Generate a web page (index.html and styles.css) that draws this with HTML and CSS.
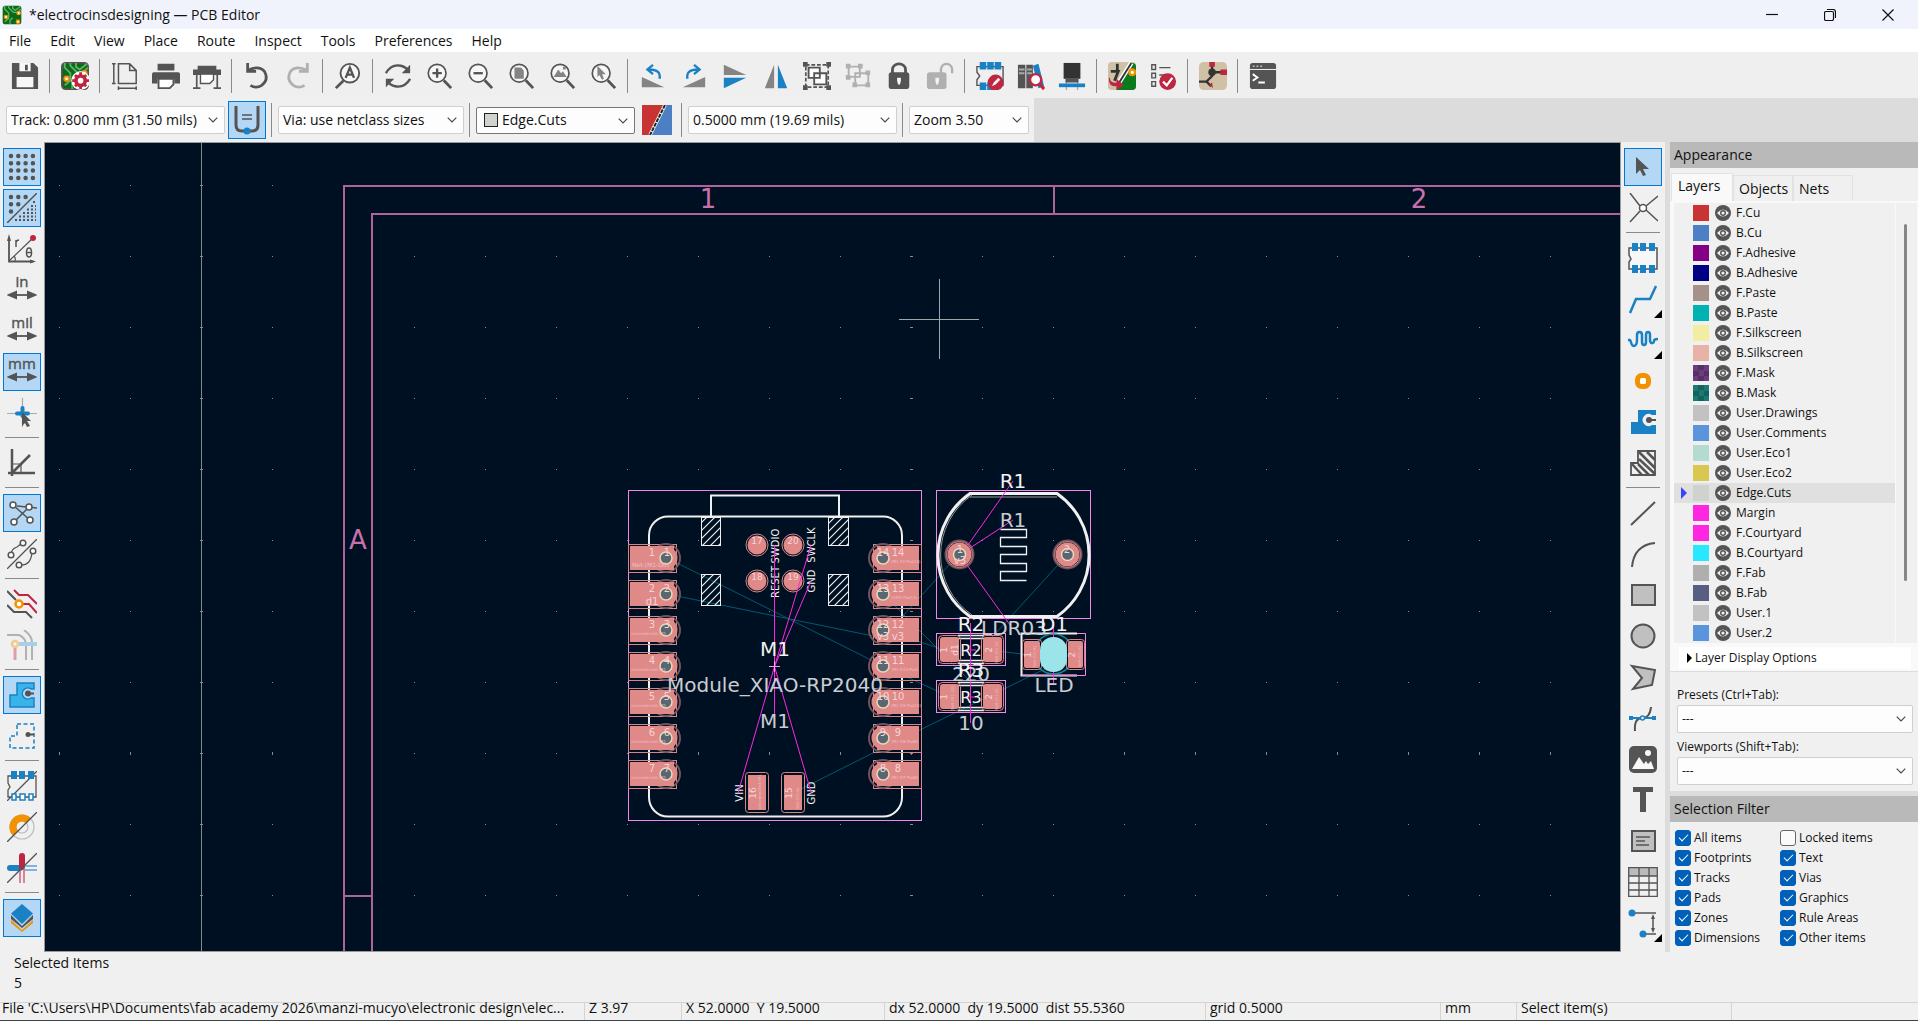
FILE: index.html
```html
<!DOCTYPE html>
<html lang="en">
<head>
<meta charset="utf-8">
<title>*electrocinsdesigning — PCB Editor</title>
<link rel="stylesheet" href="styles.css">
</head>
<body>
<svg class="defs" aria-hidden="true">
  <symbol id="eye" viewBox="0 0 16 16"><circle cx="8" cy="8" r="8" fill="#545454"/><path d="M2 8Q8 1 14 8Q8 15 2 8Z" fill="#f0f0f0"/><circle cx="8" cy="8" r="3" fill="#545454"/><circle cx="8" cy="8" r="1.6" fill="#f0f0f0"/></symbol>
  <symbol id="chev" viewBox="0 0 10 6"><path d="M.7.7 5 5 9.300.7" fill="none" stroke="#444" stroke-width="1.1"/></symbol>
  <symbol id="lens" viewBox="0 0 30 30"><circle cx="13" cy="12" r="9.500" fill="#f7f7f7" stroke="#545454" stroke-width="1.800"/><path d="M20 19.500 28 28" stroke="#545454" stroke-width="3"/></symbol>
  <symbol id="board" viewBox="0 0 30 30"><rect x="1" y="1" width="28" height="28" rx="4" fill="#0b6a16"/><path d="M4 1v5l6 6v8l-6 5M10 1v3l7 7h6l6-5M16 1v4l4 3 8-6M12 29v-6l4-4" fill="none" stroke="#5db068" stroke-width="2"/><circle cx="6" cy="18" r="2.500" fill="#fff" stroke="#f39200" stroke-width="2"/><circle cx="25" cy="12" r="2.500" fill="#fff" stroke="#f39200" stroke-width="2"/><circle cx="24" cy="25" r="2.500" fill="#fff" stroke="#f39200" stroke-width="2"/></symbol>
  <symbol id="arrows" viewBox="0 0 30 30"><path d="M4 20H26" stroke="#545454" stroke-width="1.800"/><path d="M2 20l7-3v6zM28 20l-7-3v6z" fill="#545454"/></symbol>
</svg>

<header class="titlebar">
  <svg class="appicon" viewBox="0 0 30 30"><use href="#board"/></svg>
  <h1>*electrocinsdesigning — PCB Editor</h1>
  <button aria-label="Minimize"><svg viewBox="0 0 12 12"><path d="M0 5.500H12"/></svg></button>
  <button aria-label="Restore"><svg viewBox="0 0 12 12"><rect x=".5" y="2.500" width="9" height="9" rx="1.500"/><path d="M3 .5H9Q11.500.5 11.500 3V9"/></svg></button>
  <button aria-label="Close"><svg viewBox="0 0 12 12"><path d="M.5.5l11 11M11.500.5l-11 11"/></svg></button>
</header>

<nav class="menubar">
  <button>File</button><button>Edit</button><button>View</button><button>Place</button><button>Route</button><button>Inspect</button><button>Tools</button><button>Preferences</button><button>Help</button>
</nav>

<div class="toolbar" role="toolbar">
  <button aria-label="Save"><svg viewBox="0 0 30 30"><path class="d" d="M1 1h23l5 5v23H1z"/><path class="w" d="M9 1h12v9H9zM6 16h18v11H6z"/><path class="d" d="M15 3h3v6h-3z"/></svg></button>
  <hr>
  <button aria-label="Board setup"><svg viewBox="0 0 30 30"><use href="#board"/><circle cx="21" cy="20" r="10" fill="#fff" stroke="none"/><circle cx="21" cy="20" r="5" stroke="#bf2641" stroke-width="4"/><path stroke="#bf2641" stroke-width="3" d="M21 11v4M21 25v4M12 20h4M26 20h4M15 14l3 3M24 23l3 3M27 14l-3 3M15 26l3-3"/></svg></button>
  <hr>
  <button aria-label="Page settings"><svg viewBox="0 0 30 30"><path stroke-width="1.600" d="M8 2h12l7 7v14H8zM20 2v7h7M3 2v21M1 2h4M1 23h4M8 28h19M8 26v4M27 26v4"/></svg></button>
  <button aria-label="Print"><svg viewBox="0 0 30 30"><path class="d" d="M6 2h18v7H6zM2 11h26q2 0 2 2v10h-6v-5H6v5H0V13q0-2 2-2z"/><path fill="#fff" stroke-width="2" d="M7 18h16v6l-4 4H7z"/></svg></button>
  <button aria-label="Plot"><svg viewBox="0 0 30 30"><path class="d" d="M5 4h20v4H5zM0 8h30v6H0z"/><path fill="#fff" stroke-width="1.500" d="M8 13h14v6l-4 4H8z"/><path stroke-width="1.800" d="M4 14v14M26 14v14M0 28h8M22 28h8"/></svg></button>
  <hr>
  <button aria-label="Undo"><svg viewBox="0 0 30 30"><path stroke-width="3" d="M5 9Q17 3 23 10Q28 19 20 25Q14 29 8 25M5 1v9h9"/></svg></button>
  <button aria-label="Redo" disabled><svg viewBox="0 0 30 30"><path stroke-width="3" d="M25 9Q13 3 7 10Q2 19 10 25Q16 29 22 25M25 1v9h-9"/></svg></button>
  <hr>
  <button aria-label="Find"><svg viewBox="0 0 30 30"><circle cx="17" cy="12" r="10" fill="#f7f7f7"/><path stroke-width="3" d="M10 20 2 28"/><path stroke-width="2.500" d="M12.500 17 17 6l4.500 11M14 13.500h6"/></svg></button>
  <hr>
  <button aria-label="Refresh"><svg viewBox="0 0 30 30"><path stroke-width="2.500" d="M2 12Q8 2 18 4Q23 5 27 10M28 18Q22 28 12 26Q7 25 3 20"/><path class="d" d="M28 3v9h-9zM2 27v-9h9z"/></svg></button>
  <button aria-label="Zoom in"><svg viewBox="0 0 30 30"><use href="#lens"/><path stroke-width="2.500" d="M8 12h10M13 7v10"/></svg></button>
  <button aria-label="Zoom out"><svg viewBox="0 0 30 30"><use href="#lens"/><path stroke-width="2.500" d="M8 12h10"/></svg></button>
  <button aria-label="Zoom to page"><svg viewBox="0 0 30 30"><use href="#lens"/><path class="g" d="M8 6h7l3 3v9H8z"/></svg></button>
  <button aria-label="Zoom to objects"><svg viewBox="0 0 30 30"><use href="#lens"/><path class="g" d="M6 16l5-8 3 4 2-2 4 6zM16 5h3v3h-3z"/></svg></button>
  <button aria-label="Zoom to selection"><svg viewBox="0 0 30 30"><use href="#lens"/><path class="g" d="M9 4l9 9h-4l2 5-2 1-3-5-2 2z"/></svg></button>
  <hr>
  <button aria-label="Rotate left"><svg viewBox="0 0 30 30"><path class="g" d="M3 16v11h24z"/><path class="bs" d="M22 18Q24 8 11 8M15 3l-6 5 6 5"/></svg></button>
  <button aria-label="Rotate right"><svg viewBox="0 0 30 30"><path class="g" d="M27 16v11H3z"/><path class="bs" d="M8 18Q6 8 19 8M15 3l6 5-6 5"/></svg></button>
  <button aria-label="Mirror vertically"><svg viewBox="0 0 30 30"><path class="g" d="M3 3v11h24z"/><path class="b" d="M3 28V17h24z"/></svg></button>
  <button aria-label="Mirror horizontally"><svg viewBox="0 0 30 30"><path class="g" d="M13 3v25H3z"/><path class="b" d="M17 3v25h10z"/></svg></button>
  <button aria-label="Group"><svg viewBox="0 0 30 30"><path stroke-dasharray="4 2" stroke-width="1.800" d="M3 3h24v24H3z"/><path class="d" d="M0 0h5v5H0zM25 0h5v5h-5zM0 25h5v5H0zM25 25h5v5h-5z"/><path fill="#fff" d="M6 6h12v11H6zM12 12h13v12H12z"/></svg></button>
  <button aria-label="Ungroup" disabled><svg viewBox="0 0 30 30"><path d="M5 5h12v11H5zM12 12h14v13H12z"/><path class="d" d="M2 2h5v5H2zM15 2h5v5h-5zM2 14h5v5H2zM9 22h5v5H9zM23 9h5v5h-5zM23 22h5v5h-5z"/></svg></button>
  <button aria-label="Lock"><svg viewBox="0 0 30 30"><path stroke-width="3" d="M8 12V8a7 6 0 0 1 14 0v4"/><rect class="d" x="4" y="11" width="22" height="18" rx="3"/><path class="w" d="M13 17h4v3l-1 4h-2l-1-4z"/></svg></button>
  <button aria-label="Unlock" disabled><svg viewBox="0 0 30 30"><path stroke-width="2.500" d="M16 12V8a6 6 0 0 1 12 0v4"/><rect class="d" x="1" y="11" width="21" height="18" rx="3"/><path class="w" d="M10 17h4v3l-1 4h-2l-1-4z"/></svg></button>
  <hr>
  <button aria-label="Footprint editor"><svg viewBox="0 0 30 30"><path stroke-width="1.500" d="M1 5h28v20H1v-6l3-4-3-4z"/><path class="b" d="M4 0h7v8H4zM12 0h7v8h-7zM20 0h7v8h-7zM4 22h7v8H4zM12 22h7v8h-7z"/><circle class="r" cx="21" cy="22" r="8.500"/><path d="M17 26l2-4 5-5 2 2-5 5z" class="w"/></svg></button>
  <button aria-label="Footprint browser"><svg viewBox="0 0 30 30"><path class="d" d="M1 3h8v25H1zM10 3h7v25h-7z"/><path class="b" d="M17 4l6-2 6 24-6 2z"/><path stroke="#aaa" d="M2 8h6M2 12h6M11 8h5M11 12h5"/><circle cx="20" cy="19" r="6" fill="#fff" stroke="#bf2641" stroke-width="2.500"/><path stroke="#bf2641" stroke-width="3.500" d="M24 23l5 6"/></svg></button>
  <button aria-label="3D viewer"><svg viewBox="0 0 30 30"><path stroke="#aaa" stroke-width="1.500" d="M9 20v10M21 20v10"/><path fill="#333" stroke="none" d="M6 1h18v17H6z"/><path fill="#555" stroke="none" d="M8 18h14v4H8z"/><path class="b" d="M1 23h28v4H1z"/></svg></button>
  <hr>
  <button aria-label="Update PCB from schematic"><svg viewBox="0 0 30 30"><rect x="0" y="0" width="30" height="30" rx="4" fill="#cfc1a6" stroke="none"/><path fill="#0b7a1a" stroke="none" d="M26 1q4 0 4 4v21q0 4-4 4H9z"/><path stroke="#333" stroke-width="3" d="M10 2v8M3 10h8l-4 10"/><path stroke="#fff" stroke-width="5" d="M25 1 10 25"/><path stroke="#333" stroke-width="2" d="M25 1 12 22"/><path class="r" d="M2 17q0 6 7 5v-4l8 7-8 5v-4Q0 27 1 17z"/><circle cx="26" cy="11" r="3" fill="#fff" stroke="#f39200" stroke-width="2.500"/></svg></button>
  <button aria-label="Design rules checker"><svg viewBox="0 0 30 30"><path stroke-width="1.500" d="M3 3h4v5H3zM3 12h4v5H3zM3 21h4v5H3zM11 6h12M11 14h8"/><circle class="r" cx="20" cy="21" r="9"/><path stroke="#fff" stroke-width="2.500" d="M15 21l4 4 6-8"/></svg></button>
  <hr>
  <button aria-label="Schematic editor"><svg viewBox="0 0 30 30"><rect x="0" y="0" width="30" height="30" rx="5" fill="#cfc1a6" stroke="none"/><path stroke="#333" stroke-width="2.500" d="M14 4v7M14 11h10M0 21h8l6-6v-4M8 21l5 5"/><circle cx="14" cy="11" r="4" fill="#333" stroke="none"/><path class="r" d="M11 0h6v5h-6zM23 8h7v6h-7zM11 24l4 4-1-6z"/></svg></button>
  <hr>
  <button aria-label="Scripting console"><svg viewBox="0 0 30 30"><rect class="d" x="1" y="1" width="28" height="28" rx="3"/><path stroke="#fff" stroke-width="1" d="M1 8h28M4 4.500h2M8 4.500h2M12 4.500h2"/><path stroke="#fff" stroke-width="2" d="M4 13l5 3.500L4 20M10 22h7"/></svg></button>
</div>

<div class="optionbar">
  <div class="options">
    <div class="combo track"><select aria-label="Track width"><option>Track: 0.800 mm (31.50 mils)</option></select><svg><use href="#chev"/></svg></div>
    <button class="tool on" aria-label="Use existing track width"><svg viewBox="0 0 30 30"><path stroke-width="3" d="M4 1v19q0 6 6 6h10q6 0 6-6V1"/><path stroke-width="1.500" d="M10 10h10M10 14h10"/><circle class="b" cx="15" cy="26" r="3.500"/></svg></button>
    <hr>
    <div class="combo via"><select aria-label="Via size"><option>Via: use netclass sizes</option></select><svg><use href="#chev"/></svg></div>
    <hr>
    <div class="combo layer"><i class="chip"></i><select aria-label="Active layer"><option>Edge.Cuts</option></select><svg><use href="#chev"/></svg></div>
    <button class="pair" aria-label="Layer pair"><svg viewBox="0 0 30 30"><path fill="#c83434" d="M0 0h30v30H0z"/><path fill="#4d7fc4" d="M23 0h7v30H8z"/><path stroke="#fff" stroke-width="3.500" d="M23 0 8 30"/><path stroke="#222" stroke-width="2" stroke-dasharray="4 1" d="M23 0 8 30"/></svg></button>
    <hr>
    <div class="combo grid"><select aria-label="Grid"><option>0.5000 mm (19.69 mils)</option></select><svg><use href="#chev"/></svg></div>
    <hr>
    <div class="combo zoom"><select aria-label="Zoom"><option>Zoom 3.50</option></select><svg><use href="#chev"/></svg></div>
  </div>
</div>

<main class="workspace">
  <div class="tools" role="toolbar">
    <button class="tool on" aria-label="Show grid"><svg viewBox="0 0 30 30"><path stroke-width="4.500" stroke-linecap="round" stroke-dasharray="0 7.300" d="M4 4h23M4 11.300h23M4 18.600h23M4 26h23"/></svg></button>
    <button class="tool on" aria-label="Grid overrides"><svg viewBox="0 0 30 30"><path stroke-width="1.500" d="M0 30 30 0"/><path stroke-width="4.500" stroke-linecap="round" stroke-dasharray="0 7.300" d="M4 4h15M4 11.300h8M4 18.600h1"/><path stroke-width="2" stroke-dasharray="2 2" d="M8 27h21M12 23.500h17M16 20h13M20 16.500h9M24 13h5M26 9h3"/></svg></button>
    <button class="tool" aria-label="Polar coordinates"><svg viewBox="0 0 30 30"><path stroke-width="1.800" d="M2 4v23.500h24"/><path stroke-width="1.200" d="M2 27 26 4M8 27q1-3-1-5"/><path class="d" d="M2 0l2 7H0zM29 27.500l-6-2v4z"/><circle class="r" cx="26" cy="4" r="3"/><path stroke-width="1.500" d="M9 13V6M9 8q1-2 3-2"/><ellipse cx="22" cy="18.500" rx="2.500" ry="4.500" stroke-width="1.500"/><path stroke-width="1.500" d="M19 18.500h6"/></svg></button>
    <button class="tool" aria-label="Inches"><svg viewBox="0 0 30 30"><text x="15" y="12">in</text><use href="#arrows"/></svg></button>
    <button class="tool" aria-label="Mils"><svg viewBox="0 0 30 30"><text x="15" y="12">mil</text><use href="#arrows"/></svg></button>
    <button class="tool on" aria-label="Millimeters"><svg viewBox="0 0 30 30"><text x="15" y="12">mm</text><use href="#arrows"/></svg></button>
    <button class="tool" aria-label="Full-window crosshairs"><svg viewBox="0 0 30 30"><path stroke="#aaa" stroke-width="1.200" d="M0 15.500h30M15.500 0v29"/><path stroke="#1a81c4" stroke-width="4" stroke-linecap="round" d="M10 15.500h11M15.500 10v8"/><path class="d" d="M15 14l9 9h-4l3 5-3 1-2-4-3 3z"/></svg></button>
    <hr>
    <button class="tool" aria-label="Limit angles"><svg viewBox="0 0 30 30"><path stroke-width="2.500" d="M5 1v27M1 25h27M5 25 23 7"/><path stroke-width="1.200" d="M5 16h9v9"/></svg></button>
    <hr>
    <button class="tool on" aria-label="Show ratsnest"><svg viewBox="0 0 30 30"><path stroke-width="1.500" d="M6 7l18 16M7 24 22 9M10 8l20 2"/><g fill="#fff" stroke-width="1.500"><circle cx="6" cy="7" r="3"/><circle cx="22" cy="9" r="3"/><circle cx="7" cy="24" r="3"/><circle cx="23" cy="22" r="3"/></g></svg></button>
    <button class="tool" aria-label="Curved ratsnest"><svg viewBox="0 0 30 30"><path stroke-width="1.300" d="M0 30 30 0M4 16q0-6 6-8l5-4M13 26q11 1 12-13"/><g fill="#fff" stroke-width="1.500"><circle cx="4" cy="16" r="2.800"/><circle cx="16" cy="4" r="2.800"/><circle cx="12" cy="26" r="2.800"/><circle cx="26" cy="12" r="2.800"/></g></svg></button>
    <hr>
    <button class="tool" aria-label="Net highlighting"><svg viewBox="0 0 30 30"><path d="M0 2l9 9M0 16l7 7h12l6 6"/><path stroke="#bf2641" d="M7 1l5 5h9l9 9M16 15h6l8 9"/><circle cx="12" cy="15" r="3.500" fill="#fff" stroke="#f39200" stroke-width="2.500"/></svg></button>
    <button class="tool" aria-label="Net colors" disabled><svg viewBox="0 0 30 30"><path d="M0 5h12q7 3 7 10v15M17 0q8 6 8 12v18"/><path stroke="#3aa0e0" stroke-width="4" d="M12 14h18"/><path stroke="#bf2641" stroke-width="3" d="M8 18v12"/><circle cx="8" cy="14" r="3" fill="#fff" stroke="#f39200" stroke-width="2.500"/></svg></button>
    <hr>
    <button class="tool on" aria-label="Filled zones"><svg viewBox="0 0 30 30"><path fill="#39b4ea" stroke="#1a81c4" stroke-width="1.500" d="M10 3h17v6h-3a5.500 5.500 0 1 0 0 9h3v9H3V15h7z"/><circle class="d" cx="21" cy="13.500" r="3"/><path d="M21 13.500h6"/></svg></button>
    <button class="tool" aria-label="Zone outlines"><svg viewBox="0 0 30 30"><path stroke="#1a81c4" stroke-width="1.500" stroke-dasharray="4 2.500" d="M10 3h17v24H3V15h7z"/><circle class="d" cx="21" cy="13.500" r="2.500"/><path d="M21 13.500h6"/></svg></button>
    <hr>
    <button class="tool" aria-label="Pad outlines"><svg viewBox="0 0 30 30"><path stroke-width="1.300" d="M1 5h28v21H1v-7l2-3-2-4zM0 30 30 0"/><path class="b" d="M4 0h6v8H4zM12 0h6v8h-6zM21 0h6v8h-6z"/><path fill="#fff" stroke="#1a81c4" stroke-width="1.500" d="M5 23h4v6H5zM13 23h5v6h-5zM22 23h4v6h-4z"/></svg></button>
    <button class="tool" aria-label="Via outlines"><svg viewBox="0 0 30 30"><circle cx="15" cy="15" r="12" stroke="#bbb" stroke-width="1.200"/><circle cx="15" cy="15" r="6" stroke="#bbb" stroke-width="1.200"/><path stroke="#f39200" stroke-width="7" d="M8.600 21.400A9 9 0 0 1 21.400 8.600"/><path stroke-width="1.300" d="M0 30 30 0"/></svg></button>
    <button class="tool" aria-label="Track outlines"><svg viewBox="0 0 30 30"><path stroke="#1a81c4" stroke-width="6" stroke-linecap="round" d="M3 15h10"/><path stroke="#bf2641" stroke-width="6" stroke-linecap="round" d="M15 3v11"/><path stroke="#5aa0d8" stroke-width="1.500" d="M17 13h13M17 17h13"/><path stroke="#d0607a" stroke-width="1.500" d="M13 17v13M17 17v13"/><path stroke-width="1.300" d="M0 30 30 0"/></svg></button>
    <hr>
    <button class="tool on" aria-label="Layers manager"><svg viewBox="0 0 30 30"><path fill="#f39200" stroke="none" d="M4 17l11 10 11-10v3L15 29 4 20z"/><path class="d" d="M4 12l11 11 11-11v4L15 25 4 16z"/><path class="b" d="M15 1l11 9.500L15 21 4 10.500z"/></svg></button>
  </div>

  <div class="board">
    <svg width="100%" height="100%">
      <defs>
        <pattern id="dots" patternUnits="userSpaceOnUse" x="59" y="185" width="71" height="71"><rect width="1" height="1" fill="#858c92"/></pattern>
        <pattern id="major" patternUnits="userSpaceOnUse" x="200" y="185" width="710" height="71"><rect width="3" height="1" fill="#858c92"/></pattern>
        <pattern id="hatch" patternUnits="userSpaceOnUse" width="8" height="8"><path d="M-1 9 9-1M-1 1 1-1M7 9 9 7" stroke="#eee" stroke-width="1.200"/></pattern>
        <g id="padL"><rect x=".5" y=".5" width="48" height="28" class="po"/><circle cx="38" cy="14" r="14" class="pr"/><rect x="2" y="2" width="44" height="24" class="pf"/><circle cx="38" cy="14" r="11.500" class="pf"/><circle cx="38" cy="14" r="6" class="hole"/></g>
        <g id="padR"><rect x=".5" y=".5" width="48" height="28" class="po"/><circle cx="10" cy="14" r="14" class="pr"/><rect x="4" y="2" width="42" height="24" class="pf"/><circle cx="10" cy="14" r="11.500" class="pf"/><circle cx="10" cy="14" r="6" class="hole"/></g>
        <g id="tp"><circle r="11" class="po"/><circle r="9.500" class="pf"/></g>
        <g id="th"><circle r="14" class="pr"/><circle r="13" class="po"/><circle r="12" class="pf"/><circle r="6" class="hole"/></g>
        <g id="smd"><path d="M22 2.500H48M22 5.500H48M22 27.500H48M22 30.500H48" stroke="#eee" stroke-width="1.500"/><rect x=".5" y=".5" width="69" height="32" class="cy"/><rect x="2.500" y="2.500" width="22" height="28" rx="4" class="po"/><rect x="45.500" y="2.500" width="22" height="28" rx="4" class="po"/><rect x="4" y="4" width="19" height="25" rx="3" class="pf"/><rect x="47" y="4" width="19" height="25" rx="3" class="pf"/></g>
      </defs>
      <g transform="translate(-45 -143)">
        <rect x="45" y="143" width="100%" height="100%" fill="url(#dots)"/>
        <rect x="45" y="143" width="100%" height="100%" fill="url(#major)"/>
        <path d="M59.500 752v3M130.500 752v3M201.500 752v3M272.500 752v3M698.500 752v3M769.500 752v3M840.500 752v3M911.500 752v3M1124.500 752v3M1195.500 752v3M1266.500 752v3M1337.500 752v3M1408.500 752v3M1479.500 752v3M1550.500 752v3" stroke="#858c92"/>
        <path d="M201.500 143V2000" stroke="#85898d"/>
        <g class="sheet"><path d="M3000 186H344V2000M3000 214H372V2000M1054 186v28M344 896h28"/><text x="708" y="208">1</text><text x="1419" y="208">2</text><text x="358" y="549">A</text></g>

        <g class="rats"><path d="M667 558 883 666M667 594 883 638M883 594 970 681M959 554 883 638M883 630 948 651M883 666 948 696M793 793 883 748M883 748 1053 665M1068 554 985 645M990 650 1030 655"/></g>

        <rect x="628.500" y="490.500" width="293" height="330" class="cy"/>
        <g class="silk"><path d="M711 516V495.500H839V516"/><rect x="649" y="516.500" width="253" height="300" rx="19"/></g>
        <g class="hb"><rect x="701.500" y="517.500" width="19" height="28"/><rect x="828.500" y="517.500" width="20" height="28"/><rect x="701.500" y="574.500" width="19" height="31"/><rect x="828.500" y="574.500" width="20" height="31"/></g>
        <use href="#padL" x="628" y="544"/><use href="#padL" x="628" y="580"/><use href="#padL" x="628" y="616"/><use href="#padL" x="628" y="652"/><use href="#padL" x="628" y="688"/><use href="#padL" x="628" y="724"/><use href="#padL" x="628" y="760"/>
        <use href="#padR" x="873" y="544"/><use href="#padR" x="873" y="580"/><use href="#padR" x="873" y="616"/><use href="#padR" x="873" y="652"/><use href="#padR" x="873" y="688"/><use href="#padR" x="873" y="724"/><use href="#padR" x="873" y="760"/>
        <use href="#tp" x="757" y="545"/><use href="#tp" x="793" y="545"/><use href="#tp" x="757" y="581"/><use href="#tp" x="793" y="581"/>
        <rect x="745.500" y="772.500" width="23" height="40" rx="3" class="po"/><rect x="748" y="775" width="18" height="35" class="pf"/>
        <rect x="781.500" y="772.500" width="23" height="40" rx="3" class="po"/><rect x="784" y="775" width="18" height="35" class="pf"/>
        <g class="num">
          <text x="652" y="556">1</text><text x="667" y="556">1</text><text x="652" y="592">2</text><text x="667" y="592">2</text><text x="652" y="628">3</text><text x="667" y="628">3</text><text x="652" y="664">4</text><text x="667" y="664">4</text><text x="652" y="700">5</text><text x="667" y="700">5</text><text x="652" y="736">6</text><text x="667" y="736">6</text><text x="652" y="772">7</text><text x="667" y="772">7</text>
          <text x="883" y="556">14</text><text x="898" y="556">14</text><text x="883" y="592">13</text><text x="898" y="592">13</text><text x="883" y="628">12</text><text x="898" y="628">12</text><text x="883" y="664">11</text><text x="898" y="664">11</text><text x="883" y="700">10</text><text x="898" y="700">10</text><text x="883" y="736">9</text><text x="898" y="736">9</text><text x="883" y="772">8</text><text x="898" y="772">8</text>
          <text x="652" y="605">d1</text><text x="898" y="640">v3</text><text x="883" y="640">v3</text>
        </g>
        <g class="num sm"><text x="757" y="544">17</text><text x="793" y="544">20</text><text x="757" y="580">18</text><text x="793" y="580">19</text></g>
        <g class="net"><text x="632" y="567">Net-(M1-D0)</text></g>
        <g class="tiny"><text x="631" y="635">unconnected-(M1</text><text x="631" y="671">unconnected-(M1</text><text x="631" y="707">unconnected-(M1</text><text x="631" y="743">unconnected-(M1</text><text x="631" y="779">unconnected-(M1</text><text x="891" y="563">(M1-5V-Pad14)</text><text x="891" y="599">(GND-Pad13)</text><text x="891" y="671">(M1-D10-Pad)</text><text x="891" y="707">(M1-D9-Pad10)</text><text x="891" y="743">(M1-D8-Pad9)</text><text x="891" y="779">(M1-D7-Pad8)</text></g>
        <g class="num sm"><text transform="translate(756 793) rotate(-90)">16</text><text transform="translate(792 793) rotate(-90)">15</text></g>
        <g class="label">
          <text transform="translate(779 546) rotate(-90)">SWDIO</text><text transform="translate(779 582) rotate(-90)">RESET</text><text transform="translate(815 545) rotate(-90)">SWCLK</text><text transform="translate(815 581) rotate(-90)">GND</text><text transform="translate(743 793) rotate(-90)">VIN</text><text transform="translate(815 793) rotate(-90)">GND</text>
        </g>

        <rect x="936.500" y="490.500" width="154" height="128" class="cy"/>
        <g class="silk"><path stroke-width="3" d="M970 493.500H1057A75 75 0 0 1 1057 616.500H970A75 75 0 0 1 970 493.500Z"/><path stroke-width="1" stroke="#999" d="M970 497H1057M972 495A73 73 0 0 0 972 615"/><path stroke-width="1.300" d="M1000.500 529.500h26v8h-26v9h26v8h-26v9h26v8h-26v9h26"/></g>
        <use href="#th" x="959.500" y="554.500"/><use href="#th" x="1067.500" y="554.500"/>
        <g class="num"><text x="960" y="553">1</text><text x="1067" y="553">2</text><text x="960" y="564">v3</text></g>
        <use href="#smd" x="936" y="633"/><use href="#smd" x="936" y="680"/>
        <g class="num sm"><text transform="translate(947 650) rotate(-90)">1</text><text transform="translate(992 650) rotate(-90)">2</text><text transform="translate(947 697) rotate(-90)">1</text><text transform="translate(992 697) rotate(-90)">2</text><text transform="translate(958 650) rotate(-90)">d1</text></g>

        <path d="M1077 633.500H1021.500V675.500H1077" fill="none" stroke="#eee" stroke-width="2"/>
        <path d="M1077 633.500h8.500v42H1022" class="cy"/>
        <circle cx="1053.500" cy="654" r="20" fill="none" stroke="#0a8898" stroke-width="1.500"/>
        <rect x="1022.500" y="639.500" width="19" height="30" rx="3" class="po"/><rect x="1066.500" y="639.500" width="18" height="30" rx="3" class="po"/>
        <rect x="1024" y="641" width="16" height="27" rx="2" class="pf"/><rect x="1068" y="641" width="15" height="27" rx="2" class="pf"/>
        <g class="num sm"><text transform="translate(1031 655) rotate(-90)">1</text><text transform="translate(1075 655) rotate(-90)">2</text></g>
        <g class="tiny"><text transform="translate(1036 667) rotate(-90)">Net-(D1-K)</text><text transform="translate(1081 667) rotate(-90)">Net-(D1-A)</text><text transform="translate(998 663) rotate(-90)">Net-(D1-K)</text><text transform="translate(954 710) rotate(-90)">Net-(M1-D0)</text><text transform="translate(998 710) rotate(-90)">Net-(D1-A)</text><text transform="translate(761 809) rotate(-90)">unconnected-(M1</text><text transform="translate(799 809) rotate(-90)">Net-(D1-A)</text></g>

        <g class="mag"><path d="M774.500 545V721M774.500 666.500 811 545M774.500 666.500 811 581M774.500 666.500 738 793M774.500 666.500 811 792M968 545l45-64M970 548l43-28M967 565l43 60M970.500 623V723M1053.500 622V683M965 697h11M965 650h11"/><path stroke="#ff9cf0" d="M769 666.500h11M774.500 661v11"/></g>
        <rect x="1040" y="637" width="27" height="35" rx="13" fill="#9be5ea"/>

        <g class="ref"><text x="775" y="656">M1</text><text class="fab" x="775" y="728">M1</text><text class="fab" x="775" y="692">Module_XIAO-RP2040</text><text x="1013" y="488">R1</text><text class="fab" x="1013" y="527">R1</text><text class="fab" x="1014" y="635">LDR03</text><text x="971" y="631">R2</text><text class="in" x="971" y="656">R2</text><text class="fab" x="971" y="681">220</text><text x="971" y="677">R3</text><text class="in" x="971" y="703">R3</text><text class="fab" x="971" y="730">10</text><text x="1054" y="631">D1</text><text class="fab" x="1054" y="692">LED</text></g>
        <path d="M939.500 279v80M899 319.500h80" stroke="#a0a5a8"/>
      </g>
    </svg>
  </div>

  <div class="tools" role="toolbar">
    <button class="tool on" aria-label="Select"><svg viewBox="0 0 30 30"><path class="d" d="M8 5l13 12h-6l3 6-3 1-3-6-4 4z"/></svg></button>
    <button class="tool" aria-label="Local ratsnest"><svg viewBox="0 0 30 30"><path stroke-width="1.500" d="M2 0 12 13M18 17l12 11M30 3 18 13M12 18 2 29"/><circle cx="15" cy="15" r="3.500" fill="#fff" stroke-width="1.500"/></svg></button>
    <hr>
    <button class="tool" aria-label="Place footprints"><svg viewBox="0 0 30 30"><path fill="#f7f7f7" stroke-width="1.500" d="M1 5h28v21H1v-7l2-3-2-4z"/><path class="b" d="M4 0h6v8H4zM12 0h6v8h-6zM21 0h6v8h-6zM4 22h6v8H4zM12 22h6v8h-6zM21 22h6v8h-6z"/></svg></button>
    <button class="tool more" aria-label="Route tracks"><svg viewBox="0 0 30 30"><path class="bs" d="M2 29 8 15H22L28 2"/></svg></button>
    <button class="tool more" aria-label="Tune length"><svg viewBox="0 0 30 30"><path class="bs" d="M0 15h2C3 15 3 21 5.500 21S9 18 9 15V10C9 6 14 6 14 10V17C14 21 18 21 18 17V10C18 6 22 6 22 10V15C22 19 26 19 26 16Q26 14 30 14"/></svg></button>
    <button class="tool" aria-label="Place vias"><svg viewBox="0 0 30 30"><rect x="9.500" y="9.500" width="11" height="11" rx="4" fill="#fff" stroke="#f39200" stroke-width="5"/></svg></button>
    <button class="tool" aria-label="Draw filled zones"><svg viewBox="0 0 30 30"><path class="b" d="M10 3h18v5h-4a6 6 0 1 0 0 10h4v9H3V15h7z"/><circle class="d" cx="21" cy="13" r="3"/><path d="M21 13h7"/></svg></button>
    <button class="tool" aria-label="Draw rule areas"><svg viewBox="0 0 30 30"><path d="M10 3h17v24H3V15h7z" stroke-width="1.800"/><path stroke-width="2.500" d="M11 4l16 16M11 11l16 15M4 16l10 11M10 16l11 11M19 4l8 8"/></svg></button>
    <hr>
    <button class="tool" aria-label="Draw lines"><svg viewBox="0 0 30 30"><path d="M3 27 27 4"/></svg></button>
    <button class="tool" aria-label="Draw arcs"><svg viewBox="0 0 30 30"><path d="M4 28Q6 6 27 4"/></svg></button>
    <button class="tool" aria-label="Draw rectangles"><svg viewBox="0 0 30 30"><path fill="#c0c0c0" d="M4 5h23v20H4z"/></svg></button>
    <button class="tool" aria-label="Draw circles"><svg viewBox="0 0 30 30"><circle cx="15" cy="15" r="11.500" fill="#c0c0c0"/></svg></button>
    <button class="tool" aria-label="Draw polygons"><svg viewBox="0 0 30 30"><path fill="#c0c0c0" d="M4 4l23 4-3 15-19 4 9-11z"/></svg></button>
    <button class="tool" aria-label="Draw bezier curves"><svg viewBox="0 0 30 30"><path d="M7 28Q6 15 14 15T23 4"/><path stroke="#1a81c4" d="M2 15h25"/><path class="b" d="M1 13h4v4H1zM24 13h4v4h-4z"/><circle cx="14.500" cy="15" r="2" fill="#fff" stroke="#1a81c4" stroke-width="1.500"/></svg></button>
    <button class="tool" aria-label="Place image"><svg viewBox="0 0 30 30"><rect class="d" x="1" y="2" width="28" height="27" rx="5"/><path class="w" d="M4 25l7-12 5 7 2-3 2 3 3-3 3 8z"/><circle class="w" cx="20" cy="9" r="3"/></svg></button>
    <button class="tool" aria-label="Place text"><svg viewBox="0 0 30 30"><path class="d" d="M5 2h20v5h-7v20h-6V7H5z"/></svg></button>
    <button class="tool" aria-label="Draw text boxes"><svg viewBox="0 0 30 30"><path fill="#c0c0c0" d="M4 5h23v20H4z"/><path stroke-width="1.500" d="M8 11h14M8 15h9M8 19h13"/></svg></button>
    <button class="tool" aria-label="Draw tables"><svg viewBox="0 0 30 30"><path fill="#bbb" stroke="none" d="M1 1h28v8H1z"/><path stroke-width="1.300" d="M.7.700h28.600v28.600H.7zM1 9h28M1 16h28M1 23h28M11 1v28M21 1v28"/></svg></button>
    <button class="tool more" aria-label="Draw dimensions"><svg viewBox="0 0 30 30"><path stroke-width="1.500" d="M4 5h24M16 26h12M25 9v14"/><path class="d" d="M25 6l2 5h-4zM25 25l2-5h-4z"/><circle class="b" cx="4" cy="5" r="3.500"/><circle class="b" cx="15" cy="26" r="3.500"/></svg></button>
  </div>

  <aside class="panels">
    <section class="appearance">
      <h2>Appearance</h2>
      <div class="tabs" role="tablist"><button role="tab" class="active">Layers</button><button role="tab">Objects</button><button role="tab">Nets</button></div>
      <div class="page">
        <div class="scroller">
          <ul class="layers">
            <li><i style="background:#c83434"></i><button aria-label="Toggle F.Cu"><svg><use href="#eye"/></svg></button>F.Cu</li>
            <li><i style="background:#4d7fc4"></i><button aria-label="Toggle B.Cu"><svg><use href="#eye"/></svg></button>B.Cu</li>
            <li><i style="background:#840084"></i><button aria-label="Toggle F.Adhesive"><svg><use href="#eye"/></svg></button>F.Adhesive</li>
            <li><i style="background:#000084"></i><button aria-label="Toggle B.Adhesive"><svg><use href="#eye"/></svg></button>B.Adhesive</li>
            <li><i style="background:#a5918a"></i><button aria-label="Toggle F.Paste"><svg><use href="#eye"/></svg></button>F.Paste</li>
            <li><i style="background:#00b2b2"></i><button aria-label="Toggle B.Paste"><svg><use href="#eye"/></svg></button>B.Paste</li>
            <li><i style="background:#f2eda1"></i><button aria-label="Toggle F.Silkscreen"><svg><use href="#eye"/></svg></button>F.Silkscreen</li>
            <li><i style="background:#e8b2a7"></i><button aria-label="Toggle B.Silkscreen"><svg><use href="#eye"/></svg></button>B.Silkscreen</li>
            <li><i class="checker" style="background-color:#6d3c80"></i><button aria-label="Toggle F.Mask"><svg><use href="#eye"/></svg></button>F.Mask</li>
            <li><i class="checker" style="background-color:#187a72"></i><button aria-label="Toggle B.Mask"><svg><use href="#eye"/></svg></button>B.Mask</li>
            <li><i style="background:#c2c2c2"></i><button aria-label="Toggle User.Drawings"><svg><use href="#eye"/></svg></button>User.Drawings</li>
            <li><i style="background:#5994dc"></i><button aria-label="Toggle User.Comments"><svg><use href="#eye"/></svg></button>User.Comments</li>
            <li><i style="background:#b4dbd2"></i><button aria-label="Toggle User.Eco1"><svg><use href="#eye"/></svg></button>User.Eco1</li>
            <li><i style="background:#d8c852"></i><button aria-label="Toggle User.Eco2"><svg><use href="#eye"/></svg></button>User.Eco2</li>
            <li class="current"><i style="background:#d0d2cd"></i><button aria-label="Toggle Edge.Cuts"><svg><use href="#eye"/></svg></button>Edge.Cuts</li>
            <li><i style="background:#ff26e2"></i><button aria-label="Toggle Margin"><svg><use href="#eye"/></svg></button>Margin</li>
            <li><i style="background:#ff26e2"></i><button aria-label="Toggle F.Courtyard"><svg><use href="#eye"/></svg></button>F.Courtyard</li>
            <li><i style="background:#26e9ff"></i><button aria-label="Toggle B.Courtyard"><svg><use href="#eye"/></svg></button>B.Courtyard</li>
            <li><i style="background:#afafaf"></i><button aria-label="Toggle F.Fab"><svg><use href="#eye"/></svg></button>F.Fab</li>
            <li><i style="background:#585d84"></i><button aria-label="Toggle B.Fab"><svg><use href="#eye"/></svg></button>B.Fab</li>
            <li><i style="background:#c2c2c2"></i><button aria-label="Toggle User.1"><svg><use href="#eye"/></svg></button>User.1</li>
            <li><i style="background:#5994dc"></i><button aria-label="Toggle User.2"><svg><use href="#eye"/></svg></button>User.2</li>
          </ul>
          <div class="scrollbar"><span></span></div>
        </div>
        <button class="disclosure"><svg viewBox="0 0 5 10"><path d="M0 0l5 5-5 5z"/></svg>Layer Display Options</button>
      </div>
      <label for="presets">Presets (Ctrl+Tab):</label>
      <div class="combo"><select id="presets"><option>---</option></select><svg><use href="#chev"/></svg></div>
      <label for="viewports">Viewports (Shift+Tab):</label>
      <div class="combo"><select id="viewports"><option>---</option></select><svg><use href="#chev"/></svg></div>
    </section>
    <section class="filter">
      <h2>Selection Filter</h2>
      <div class="checks">
        <label><input type="checkbox" checked>All items</label><label><input type="checkbox">Locked items</label>
        <label><input type="checkbox" checked>Footprints</label><label><input type="checkbox" checked>Text</label>
        <label><input type="checkbox" checked>Tracks</label><label><input type="checkbox" checked>Vias</label>
        <label><input type="checkbox" checked>Pads</label><label><input type="checkbox" checked>Graphics</label>
        <label><input type="checkbox" checked>Zones</label><label><input type="checkbox" checked>Rule Areas</label>
        <label><input type="checkbox" checked>Dimensions</label><label><input type="checkbox" checked>Other items</label>
      </div>
    </section>
  </aside>
</main>

<div class="message"><div>Selected Items</div><div>5</div></div>
<footer class="status">
  <span>File 'C:\Users\HP\Documents\fab academy 2026\manzi-mucyo\electronic design\elec...</span><span>Z 3.97</span><span>X 52.0000&nbsp; Y 19.5000</span><span>dx 52.0000&nbsp; dy 19.5000&nbsp; dist 55.5360</span><span>grid 0.5000</span><span>mm</span><span>Select item(s)</span><span></span>
</footer>
</body>
</html>
```

FILE: styles.css
```css
* { box-sizing: border-box; }
body {
  margin: 0;
  min-height: 100vh;
  display: flex;
  flex-direction: column;
  background: #f0f0f0;
  color: #111;
  font: 14px/20px "Open Sans", "Noto Sans", sans-serif;
}
button { border: 0; padding: 0; background: none; font: inherit; color: inherit; }
svg { display: block; }
.defs { position: absolute; width: 0; height: 0; }
hr { border: 0; margin: 0; background: #8a8a8a; flex: none; }

/* Window chrome */
.titlebar { display: flex; align-items: center; height: 29px; padding: 0 1px 0 2px; background: #f0f3fb; }
.appicon { width: 20px; height: 20px; margin-right: 7px; }
.titlebar h1 { margin: 0; flex: 1; font-size: 14px; font-weight: 400; }
.titlebar button { width: 58px; height: 29px; display: grid; place-items: center; }
.titlebar button svg { width: 12px; height: 12px; fill: none; stroke: #111; stroke-width: 1.2; }
.menubar { display: flex; gap: 1px; height: 23px; background: #fff; }
.menubar button { padding: 0 9px; }

/* Main toolbar */
.toolbar { display: flex; align-items: center; height: 46px; padding: 2px 4px 0; background: #efefef; }
.toolbar hr, .optionbar hr { width: 1px; height: 34px; margin: 0 4px; }
.toolbar button { width: 41px; height: 38px; display: grid; place-items: center; flex: none; }
.toolbar svg, .tool svg { width: 30px; height: 30px; fill: none; stroke: #545454; stroke-width: 2; }
.toolbar svg { width: 28px; height: 28px; }
button:disabled svg { opacity: .4; }
svg .d { fill: #545454; stroke: none; }
svg .w { fill: #f7f7f7; stroke: none; }
svg .g { fill: #848484; stroke: none; }
svg .b { fill: #1a81c4; stroke: none; }
svg .r { fill: #bf2641; stroke: none; }
svg .bs { fill: none; stroke: #1a81c4; stroke-width: 2.5; }

/* Options toolbar */
.optionbar { display: flex; height: 44px; background: #dcdcdc; }
.options { display: flex; align-items: center; padding: 0 5px 0 6px; background: #f0f0f0; }
.optionbar hr { margin: 0 6px 0 5px; }
.combo { position: relative; display: flex; align-items: center; height: 28px; border: 1px solid #cfcfcf; border-radius: 2px; background: #fdfdfd; }
.combo select { appearance: none; flex: 1; min-width: 0; height: 26px; padding: 0 0 0 4px; border: 0; background: none; font: inherit; color: inherit; }
.combo svg { position: absolute; right: 6px; top: 10px; width: 10px; height: 6px; pointer-events: none; }
.track { width: 219px; margin-right: 3px; }
.via { width: 186px; }
.layer { width: 159px; border-color: #777; height: 27px; }
.grid { width: 209px; }
.zoom { width: 120px; }
.chip { width: 14px; height: 14px; margin-left: 7px; border: 1px solid #222; background: #d0d2cd; }
.pair { width: 30px; height: 30px; margin: 0 4px 0 7px; }
.tool { width: 38px; height: 38px; flex: none; display: grid; place-items: center; position: relative; border: 1px solid transparent; }
.tool.on { background: #b3d7f5; border-color: #0078d7; }
.tool text { font-size: 15px; text-anchor: middle; fill: #545454; stroke: #545454; stroke-width: 0.4; }
.more::after { content: ""; position: absolute; right: -1px; bottom: -1px; border: 4px solid; border-color: transparent #000 #000 transparent; }

/* Workspace */
.workspace { flex: 1; display: flex; min-height: 0; }
.tools { width: 44px; flex: none; display: flex; flex-direction: column; align-items: center; gap: 3px; padding: 6px 0; }
.tools hr { width: 34px; height: 1px; margin: 2px 0 3px; }
.board { flex: 1; min-width: 0; position: relative; border: 1px solid #9a9a9a; background: #001023; overflow: hidden; }
.board > svg { position: absolute; inset: 0; }
.board text { font-family: "DejaVu Sans", sans-serif; text-anchor: middle; }
.sheet { stroke: #b0639a; stroke-width: 2; fill: none; }
.sheet text { font-size: 26px; fill: #c872ab; stroke: none; }
.rats { stroke: #005a6c; fill: none; }
.cy { fill: none; stroke: #f488e6; }
.silk { fill: none; stroke: #f0f0f0; stroke-width: 2; }
.hb { fill: url(#hatch); stroke: #eee; }
.po { fill: none; stroke: #d98584; }
.pr { fill: none; stroke: #74545c; stroke-width: 2; }
.pf { fill: #df8989; }
.hole { fill: #5a6672; stroke: #e6dcb8; stroke-width: 1.5; }
.num { fill: #f7d3d6; font-size: 10px; }
.sm { font-size: 9px; }
.net { fill: #f3bfc2; font-size: 6px; }
.board .net text, .board .tiny text { text-anchor: start; }
.tiny { fill: #f3bfc2; font-size: 4px; }
.label { fill: #f4f4f4; font-size: 10px; }
.mag { fill: none; stroke: #ff26e2; }
.ref { fill: #f2f2f2; font-size: 20px; }
.ref .fab { fill: #c9cdd1; }
.ref .in { font-size: 16px; }

/* Side panels */
.panels { width: 253px; flex: none; border-left: 5px solid #dcdcdc; display: flex; flex-direction: column; font-size: 12px; }
.panels h2 { margin: 0; padding: 0 4px; font-size: 14px; font-weight: 400; line-height: 26px; background: #b9b9b9; }
.tabs { display: flex; align-items: flex-end; height: 33px; padding-left: 1px; font-size: 14px; }
.tabs button { height: 26px; padding: 0 6px 0 5px; border: 1px solid #e2e2e2; border-bottom: 0; text-align: left; width: 60px; }
.tabs .active { height: 28px; width: 62px; padding: 0 0 4px 6px; background: #f9f9f9; }
.page { background: #f9f9f9; border-bottom: 1px solid #dcdcdc; padding: 2px 1px 2px 4px; }
.scroller { display: flex; gap: 1px; }
.layers { flex: 1; margin: 0; padding: 0; list-style: none; background: #f0f0f0; }
.layers li { display: flex; align-items: center; height: 20px; padding-left: 19px; }
.layers i { width: 16px; height: 16px; margin-right: 6px; }
.layers button { width: 16px; height: 16px; margin-right: 5px; }
.layers svg { width: 16px; height: 16px; }
.layers .current { padding-left: 7px; background: #e0e0e0; }
.current::before { content: ""; margin-right: 6px; border: 6px solid transparent; border-left-color: #3a46f5; border-right: 0; }
.checker { background-image: conic-gradient(#0003 25%, transparent 0 50%, #0003 0 75%, transparent 0); background-size: 11px 11px; }
.scrollbar { width: 21px; background: #f0f0f0; padding: 21px 8px 62px; display: flex; }
.scrollbar span { width: 3px; border-radius: 2px; background: #868686; }
.disclosure { display: flex; align-items: center; gap: 3px; width: 232px; height: 22px; margin: 4px 0 0 5px; padding-left: 8px; background: #fff; }
.disclosure svg { width: 5px; height: 10px; }
.appearance > label { display: block; margin: 13px 7px 0; }
.appearance > label ~ label { margin-top: 4px; }
.appearance > .combo { margin: 0 5px 0 7px; }
.filter { border-top: 5px solid #dcdcdc; margin-top: 6px; }
.checks { display: grid; grid-template-columns: 105px 1fr; padding: 6px 5px 4px; }
.checks label { display: flex; align-items: center; gap: 3px; height: 20px; }
.checks input { appearance: none; width: 16px; height: 16px; margin: 0; border: 1px solid #666; border-radius: 3px; background: #fafafa; display: grid; place-items: center; }
.checks input:checked { background: #005fb8; border-color: #005fb8; }
.checks input:checked::before { content: ""; width: 8px; height: 4px; margin-bottom: 3px; border: solid #fff; border-width: 0 0 1px 1px; transform: rotate(-45deg); }

/* Bottom bars */
.message { height: 50px; padding: 1px 14px; }
.status { display: grid; grid-template-columns: 585fr 97fr 203fr 321fr 235fr 76fr 215fr 186fr; height: 19px; border-top: 1px solid #d4d4d4; border-bottom: 1px solid #3a4444; line-height: 10px; }
.status span { min-width: 0; padding: 0 4px; border-right: 1px solid #d4d4d4; white-space: nowrap; }
.status span:first-child { padding-left: 2px; }
.status span:last-child { border-right: 0; }
```
